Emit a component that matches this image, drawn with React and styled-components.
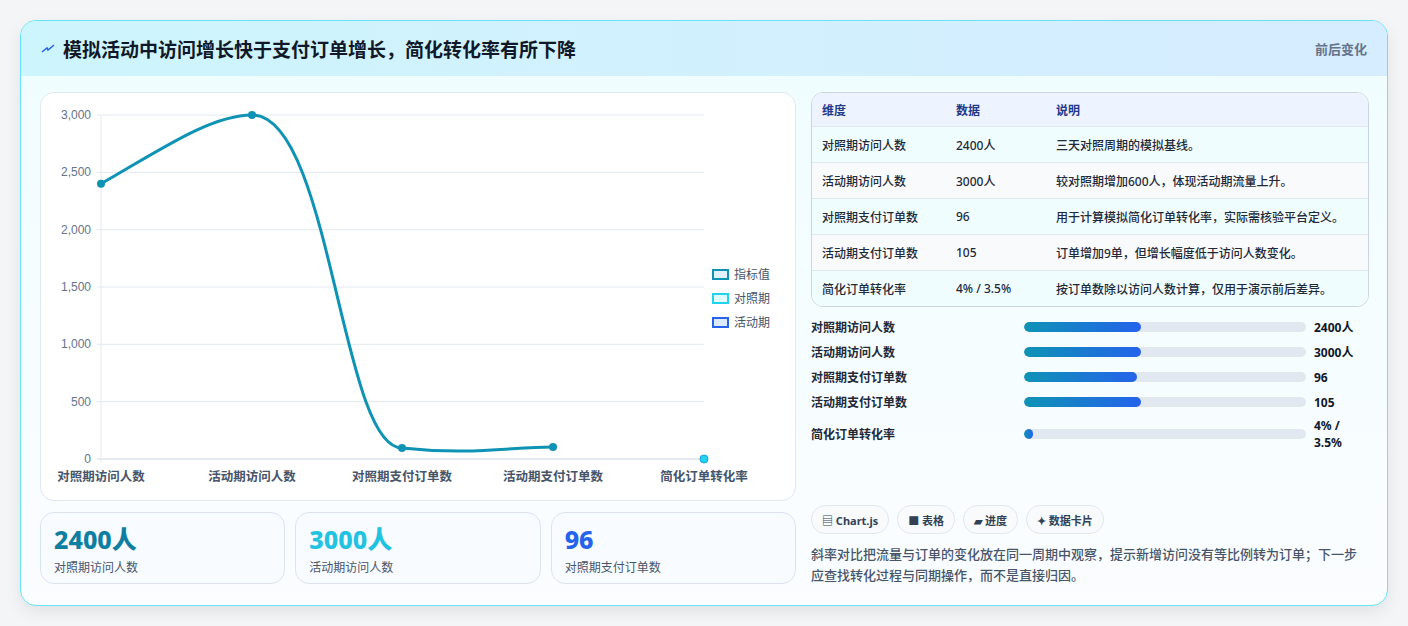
import React from "react";
import styled, { createGlobalStyle } from "styled-components";

const Global = createGlobalStyle`
  body { margin: 0; background: #f4f5f7; font-family: "Noto Sans", "Noto Sans CJK SC", sans-serif; }
`;

const Page = styled.div`
  padding: 20px;
  height: 586px;
  box-sizing: content-box;
`;

const Card = styled.div`
  width: 1366px;
  height: 584px;
  border: 1px solid #67e3f5;
  border-radius: 16px;
  background: linear-gradient(180deg, #effdff 0%, #fbfdff 100%);
  box-shadow: 0 6px 16px rgba(0, 0, 0, 0.08);
  overflow: hidden;
  display: flex;
  flex-direction: column;
`;

const Header = styled.div`
  height: 55px;
  display: flex;
  align-items: center;
  justify-content: space-between;
  padding: 0 20px;
  background: linear-gradient(90deg, #cdf5fd 0%, #d6ecff 100%);
  h1 {
    margin: 0;
    font-size: 19px;
    font-weight: 700;
    color: #111827;
    display: flex;
    align-items: center;
    gap: 8px;
  }
  span { font-size: 13px; color: #64748b; font-weight: 600; }
`;

const Body = styled.div`
  flex: 1;
  display: grid;
  grid-template-columns: 756px 558px;
  gap: 15px;
  padding: 16px 19px 19px 19px;
`;

const Left = styled.div`
  display: flex;
  flex-direction: column;
  gap: 11px;
`;

const ChartBox = styled.div`
  height: 407px;
  border: 1px solid #e2e8f0;
  border-radius: 14px;
  background: #fff;
  position: relative;
`;

const Stats = styled.div`
  display: grid;
  grid-template-columns: repeat(3, 1fr);
  gap: 10px;
`;

const Stat = styled.div`
  height: 72px;
  border: 1px solid #dbe4ee;
  border-radius: 14px;
  background: #f8fbff;
  padding: 10px 13px;
  box-sizing: border-box;
  b { display: block; font-size: 25px; line-height: 32px; font-weight: 800; color: ${(p) => p.color}; }
  small { font-size: 12px; color: #475569; }
`;

const Right = styled.div`
  display: flex;
  flex-direction: column;
`;

const Table = styled.div`
  border: 1px solid #cbd5e1;
  border-radius: 12px;
  overflow: hidden;
  background: #fff;
`;

const Row = styled.div`
  display: grid;
  grid-template-columns: 134px 100px 1fr;
  height: ${(p) => (p.head ? 33 : 35)}px;
  align-items: center;
  padding: 0 10px;
  font-size: 12px;
  font-weight: ${(p) => (p.head ? 700 : 500)};
  color: ${(p) => (p.head ? "#1e3a8a" : "#1f2937")};
  background: ${(p) => (p.head ? "#eef4ff" : p.alt ? "#f8fafc" : "#f0fdff")};
  border-top: ${(p) => (p.head ? "none" : "1px solid #e2e8f0")};
`;

const Bars = styled.div`
  margin-top: 10px;
  display: flex;
  flex-direction: column;
  gap: 5px;
`;

const BarRow = styled.div`
  display: grid;
  grid-template-columns: 205px 282px 1fr;
  align-items: center;
  gap: 0 8px;
  height: 20px;
  font-size: 12px;
  font-weight: 600;
  color: #1f2937;
  b { font-weight: 700; color: #111827; }
`;

const Track = styled.div`
  height: 10px;
  border-radius: 5px;
  background: #e2e8f0;
  overflow: hidden;
`;

const Fill = styled.div`
  height: 100%;
  border-radius: 5px;
  background: linear-gradient(90deg, #0e93b5, #2563eb);
`;

const Chips = styled.div`
  margin-top: auto;
  display: flex;
  gap: 8px;
`;

const Chip = styled.div`
  height: 27px;
  padding: 0 10px;
  border: 1px solid #e2e8f0;
  border-radius: 14px;
  background: #f8fafc;
  display: flex;
  align-items: center;
  gap: 4px;
  font-size: 11px;
  font-weight: 700;
  color: #334155;
`;

const Note = styled.p`
  margin: 10px 0 0;
  font-size: 13px;
  line-height: 21px;
  color: #475569;
  font-weight: 500;
`;

const Legend = styled.div`
  position: absolute;
  left: 671px;
  top: 172px;
  display: flex;
  flex-direction: column;
  gap: 6px;
  font-size: 12px;
  color: #475569;
`;

const LegendItem = styled.div`
  display: flex;
  align-items: center;
  gap: 5px;
  i {
    width: 17px;
    height: 11px;
    border: 2px solid ${(p) => p.c};
    background: ${(p) => p.bg};
    box-sizing: border-box;
  }
`;

const rows = [
  ["对照期访问人数", "2400人", "三天对照周期的模拟基线。"],
  ["活动期访问人数", "3000人", "较对照期增加600人，体现活动期流量上升。"],
  ["对照期支付订单数", "96", "用于计算模拟简化订单转化率，实际需核验平台定义。"],
  ["活动期支付订单数", "105", "订单增加9单，但增长幅度低于访问人数变化。"],
  ["简化订单转化率", "4% / 3.5%", "按订单数除以访问人数计算，仅用于演示前后差异。"],
];
const bars = [
  ["对照期访问人数", 41.5, "2400人"],
  ["活动期访问人数", 41.5, "3000人"],
  ["对照期支付订单数", 40, "96"],
  ["活动期支付订单数", 41.5, "105"],
  ["简化订单转化率", 3.2, "4% / 3.5%"],
];

function Chart() {
  // plot coords relative to chart box (box at x=40,y=93)
  const y = (v) => 22 + (3000 - v) * (344 / 3000);
  const xs = [60, 211, 361, 512, 663];
  const ticks = [0, 500, 1000, 1500, 2000, 2500, 3000];
  const labels = ["对照期访问人数", "活动期访问人数", "对照期支付订单数", "活动期支付订单数", "简化订单转化率"];
  return (
    <svg width="756" height="407" style={{ position: "absolute", left: 0, top: 0 }}>
      {ticks.map((t) => (
        <g key={t}>
          <line x1="56" x2="663" y1={y(t)} y2={y(t)} stroke={t === 0 ? "#cbd5e1" : "#e2e8f0"} />
          <text x="50" y={y(t) + 4} textAnchor="end" fontSize="12" fill="#64748b" fontFamily="Liberation Sans, sans-serif">
            {t.toLocaleString("en-US")}
          </text>
        </g>
      ))}
      <line x1="60" x2="60" y1="22" y2="370" stroke="#e2e8f0" />
      {labels.map((l, i) => (
        <text key={l} x={xs[i]} y="388" textAnchor="middle" fontSize="12.5" fill="#475569" fontWeight="600">{l}</text>
      ))}
      <path
        d={`M60 ${y(2400)} C120 ${y(2700)} 170 ${y(3000)} 211 ${y(3000)} C290 ${y(3000)} 300 ${y(90)} 361 ${y(96)} C430 ${y(30)} 470 ${y(105)} 512 ${y(105)}`}
        fill="none"
        stroke="#0e93b5"
        strokeWidth="3"
      />
      {[2400, 3000, 96, 105].map((v, i) => (
        <circle key={i} cx={xs[i]} cy={y(v)} r="4" fill="#0e93b5" />
      ))}
      <circle cx="663" cy={y(0)} r="4" fill="#22d3ee" stroke="#0ea5e9" />
    </svg>
  );
}

export default function App() {
  return (
    <Page>
      <Global />
      <Card>
        <Header>
          <h1>
            <svg width="14" height="10" viewBox="0 0 14 10"><path d="M1 8 L6 4 L7 6 L13 1" stroke="#2563eb" strokeWidth="1.5" fill="none" /></svg>
            模拟活动中访问增长快于支付订单增长，简化转化率有所下降
          </h1>
          <span>前后变化</span>
        </Header>
        <Body>
          <Left>
            <ChartBox>
              <Chart />
              <Legend>
                <LegendItem c="#0e93b5" bg="#e0f2fe"><i />指标值</LegendItem>
                <LegendItem c="#22d3ee" bg="#e0fbff"><i />对照期</LegendItem>
                <LegendItem c="#2563eb" bg="#dbeafe"><i />活动期</LegendItem>
              </Legend>
            </ChartBox>
            <Stats>
              <Stat color="#0e7fa0"><b>2400人</b><small>对照期访问人数</small></Stat>
              <Stat color="#22c3e0"><b>3000人</b><small>活动期访问人数</small></Stat>
              <Stat color="#2563eb"><b>96</b><small>对照期支付订单数</small></Stat>
            </Stats>
          </Left>
          <Right>
            <Table>
              <Row head><span>维度</span><span>数据</span><span>说明</span></Row>
              {rows.map((r, i) => (
                <Row key={r[0]} alt={i % 2 === 1}><span>{r[0]}</span><span>{r[1]}</span><span>{r[2]}</span></Row>
              ))}
            </Table>
            <Bars>
              {bars.map((b) => (
                <BarRow key={b[0]}>
                  <span>{b[0]}</span>
                  <Track><Fill style={{ width: `${b[1]}%` }} /></Track>
                  <b>{b[2]}</b>
                </BarRow>
              ))}
            </Bars>
            <Chips>
              <Chip>▤ Chart.js</Chip>
              <Chip>■ 表格</Chip>
              <Chip>▰ 进度</Chip>
              <Chip>✦ 数据卡片</Chip>
            </Chips>
            <Note>斜率对比把流量与订单的变化放在同一周期中观察，提示新增访问没有等比例转为订单；下一步应查找转化过程与同期操作，而不是直接归因。</Note>
          </Right>
        </Body>
      </Card>
    </Page>
  );
}
